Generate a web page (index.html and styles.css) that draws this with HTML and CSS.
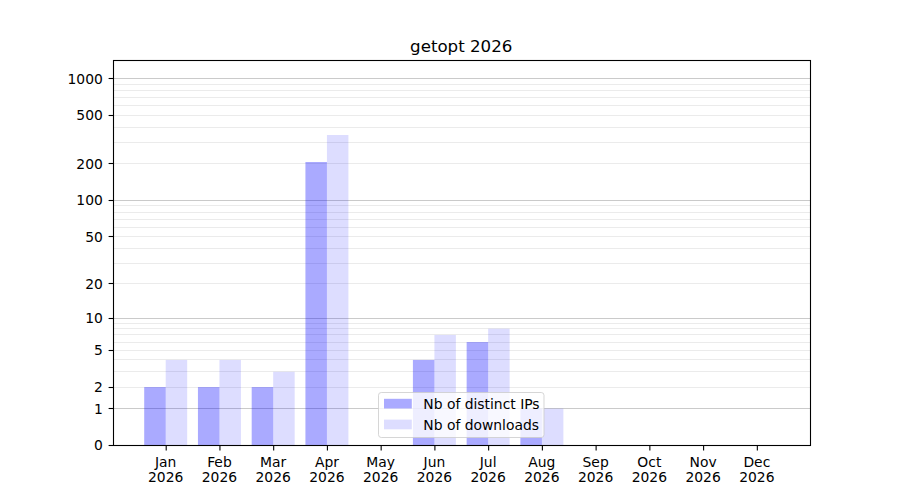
FILE: index.html
```html
<!DOCTYPE html>
<html>
<head>
<meta charset="utf-8">
<link rel="stylesheet" href="styles.css">
</head>
<body>
<div class="figure">
<svg class="chart" width="900" height="500" viewBox="0 0 900 500">
  <text class="title" x="461.25" y="51.7">getopt 2026</text>

  <g class="grid-minor">
    <line x1="113" x2="810" y1="387.5" y2="387.5"/>
    <line x1="113" x2="810" y1="371.5" y2="371.5"/>
    <line x1="113" x2="810" y1="359.5" y2="359.5"/>
    <line x1="113" x2="810" y1="350.5" y2="350.5"/>
    <line x1="113" x2="810" y1="342.5" y2="342.5"/>
    <line x1="113" x2="810" y1="334.5" y2="334.5"/>
    <line x1="113" x2="810" y1="328.5" y2="328.5"/>
    <line x1="113" x2="810" y1="323.5" y2="323.5"/>
    <line x1="113" x2="810" y1="283.5" y2="283.5"/>
    <line x1="113" x2="810" y1="263.5" y2="263.5"/>
    <line x1="113" x2="810" y1="248.5" y2="248.5"/>
    <line x1="113" x2="810" y1="236.5" y2="236.5"/>
    <line x1="113" x2="810" y1="227.5" y2="227.5"/>
    <line x1="113" x2="810" y1="219.5" y2="219.5"/>
    <line x1="113" x2="810" y1="212.5" y2="212.5"/>
    <line x1="113" x2="810" y1="205.5" y2="205.5"/>
    <line x1="113" x2="810" y1="163.5" y2="163.5"/>
    <line x1="113" x2="810" y1="142.5" y2="142.5"/>
    <line x1="113" x2="810" y1="127.5" y2="127.5"/>
    <line x1="113" x2="810" y1="115.5" y2="115.5"/>
    <line x1="113" x2="810" y1="105.5" y2="105.5"/>
    <line x1="113" x2="810" y1="97.5" y2="97.5"/>
    <line x1="113" x2="810" y1="90.5" y2="90.5"/>
    <line x1="113" x2="810" y1="84.5" y2="84.5"/>
  </g>
  <g class="grid-major">
    <line x1="113" x2="810" y1="408.5" y2="408.5"/>
    <line x1="113" x2="810" y1="318.5" y2="318.5"/>
    <line x1="113" x2="810" y1="200.5" y2="200.5"/>
    <line x1="113" x2="810" y1="78.5" y2="78.5"/>
  </g>

  <g class="bar-ip">
    <rect x="144.2" y="387.05" width="21.5" height="58.35"/>
    <rect x="197.94" y="387.05" width="21.5" height="58.35"/>
    <rect x="251.68" y="387.05" width="21.5" height="58.35"/>
    <rect x="305.42" y="162" width="21.5" height="283.4"/>
    <rect x="412.9" y="359.92" width="21.5" height="85.48"/>
    <rect x="466.64" y="342.04" width="21.5" height="103.36"/>
    <rect x="520.38" y="408.58" width="21.5" height="36.82"/>
  </g>
  <g class="bar-dl">
    <rect x="165.7" y="359.92" width="21.5" height="85.48"/>
    <rect x="219.44" y="359.92" width="21.5" height="85.48"/>
    <rect x="273.18" y="371.77" width="21.5" height="73.63"/>
    <rect x="326.92" y="135" width="21.5" height="310.4"/>
    <rect x="434.4" y="334.95" width="21.5" height="110.45"/>
    <rect x="488.14" y="328.7" width="21.5" height="116.7"/>
    <rect x="541.88" y="408.58" width="21.5" height="36.82"/>
  </g>

  <rect class="spine" x="113.5" y="60.5" width="697" height="385"/>

  <g class="tick">
    <line x1="108.6" x2="113.5" y1="445.5" y2="445.5"/>
    <line x1="108.6" x2="113.5" y1="408.5" y2="408.5"/>
    <line x1="108.6" x2="113.5" y1="387.5" y2="387.5"/>
    <line x1="108.6" x2="113.5" y1="350.5" y2="350.5"/>
    <line x1="108.6" x2="113.5" y1="318.5" y2="318.5"/>
    <line x1="108.6" x2="113.5" y1="283.5" y2="283.5"/>
    <line x1="108.6" x2="113.5" y1="236.5" y2="236.5"/>
    <line x1="108.6" x2="113.5" y1="200.5" y2="200.5"/>
    <line x1="108.6" x2="113.5" y1="163.5" y2="163.5"/>
    <line x1="108.6" x2="113.5" y1="115.5" y2="115.5"/>
    <line x1="108.6" x2="113.5" y1="78.5" y2="78.5"/>
  </g>
  <g class="ylabel">
    <text x="102.8" y="450.4">0</text>
    <text x="102.8" y="413.6">1</text>
    <text x="102.8" y="392.1">2</text>
    <text x="102.8" y="355.3">5</text>
    <text x="102.8" y="323.1">10</text>
    <text x="102.8" y="288.7">20</text>
    <text x="102.8" y="241.6">50</text>
    <text x="102.8" y="205.3">100</text>
    <text x="102.8" y="168.8">200</text>
    <text x="102.8" y="120.3">500</text>
    <text x="102.8" y="83.5">1000</text>
  </g>

  <g class="tick">
    <line x1="166.2" x2="166.2" y1="445.5" y2="450.4"/>
    <line x1="219.94" x2="219.94" y1="445.5" y2="450.4"/>
    <line x1="273.68" x2="273.68" y1="445.5" y2="450.4"/>
    <line x1="327.42" x2="327.42" y1="445.5" y2="450.4"/>
    <line x1="381.16" x2="381.16" y1="445.5" y2="450.4"/>
    <line x1="434.9" x2="434.9" y1="445.5" y2="450.4"/>
    <line x1="488.64" x2="488.64" y1="445.5" y2="450.4"/>
    <line x1="542.38" x2="542.38" y1="445.5" y2="450.4"/>
    <line x1="596.12" x2="596.12" y1="445.5" y2="450.4"/>
    <line x1="649.86" x2="649.86" y1="445.5" y2="450.4"/>
    <line x1="703.6" x2="703.6" y1="445.5" y2="450.4"/>
    <line x1="757.34" x2="757.34" y1="445.5" y2="450.4"/>
  </g>
  <g class="xlabel">
    <text x="165.7" y="466.8">Jan</text><text x="165.7" y="482">2026</text>
    <text x="219.44" y="466.8">Feb</text><text x="219.44" y="482">2026</text>
    <text x="273.18" y="466.8">Mar</text><text x="273.18" y="482">2026</text>
    <text x="326.92" y="466.8">Apr</text><text x="326.92" y="482">2026</text>
    <text x="380.66" y="466.8">May</text><text x="380.66" y="482">2026</text>
    <text x="434.4" y="466.8">Jun</text><text x="434.4" y="482">2026</text>
    <text x="488.14" y="466.8">Jul</text><text x="488.14" y="482">2026</text>
    <text x="541.88" y="466.8">Aug</text><text x="541.88" y="482">2026</text>
    <text x="595.62" y="466.8">Sep</text><text x="595.62" y="482">2026</text>
    <text x="649.36" y="466.8">Oct</text><text x="649.36" y="482">2026</text>
    <text x="703.1" y="466.8">Nov</text><text x="703.1" y="482">2026</text>
    <text x="756.84" y="466.8">Dec</text><text x="756.84" y="482">2026</text>
  </g>

  <g class="legend">
    <rect class="legend-frame" x="378.5" y="392.5" width="165.5" height="45" rx="2.8"/>
    <rect class="swatch-ip" x="384" y="398.8" width="27.8" height="9.7"/>
    <rect class="swatch-dl" x="384" y="419.6" width="27.8" height="9.7"/>
    <text class="legend-text" x="423.3" y="409.3">Nb of distinct IPs</text>
    <text class="legend-text" x="423.3" y="430">Nb of downloads</text>
  </g>
</svg>
</div>
</body>
</html>
```

FILE: styles.css
```css
html, body {
  margin: 0;
  padding: 0;
  background: #ffffff;
}

.figure {
  width: 900px;
  height: 500px;
  overflow: hidden;
}

.chart {
  display: block;
  font-family: "DejaVu Sans", "Liberation Sans", sans-serif;
}

.title {
  font-size: 16.67px;
  text-anchor: middle;
  fill: #000000;
}

.grid-minor line {
  stroke: #ebebeb;
  stroke-width: 1;
}

.grid-major line {
  stroke: #cacaca;
  stroke-width: 1;
}

.bar-ip rect {
  fill: #0000ff;
  fill-opacity: 0.333;
}

.bar-dl rect {
  fill: #0000ff;
  fill-opacity: 0.135;
}

.spine {
  fill: none;
  stroke: #000000;
  stroke-width: 1.1;
}

.tick line {
  stroke: #000000;
  stroke-width: 1.1;
}

.ylabel text {
  font-size: 13.89px;
  text-anchor: end;
  fill: #000000;
}

.xlabel text {
  font-size: 13.89px;
  text-anchor: middle;
  fill: #000000;
}

.legend-frame {
  fill: #ffffff;
  fill-opacity: 0.8;
  stroke: #cccccc;
  stroke-opacity: 0.8;
  stroke-width: 1;
}

.swatch-ip {
  fill: #0000ff;
  fill-opacity: 0.333;
}

.swatch-dl {
  fill: #0000ff;
  fill-opacity: 0.135;
}

.legend-text {
  font-size: 13.89px;
  fill: #000000;
}
```
